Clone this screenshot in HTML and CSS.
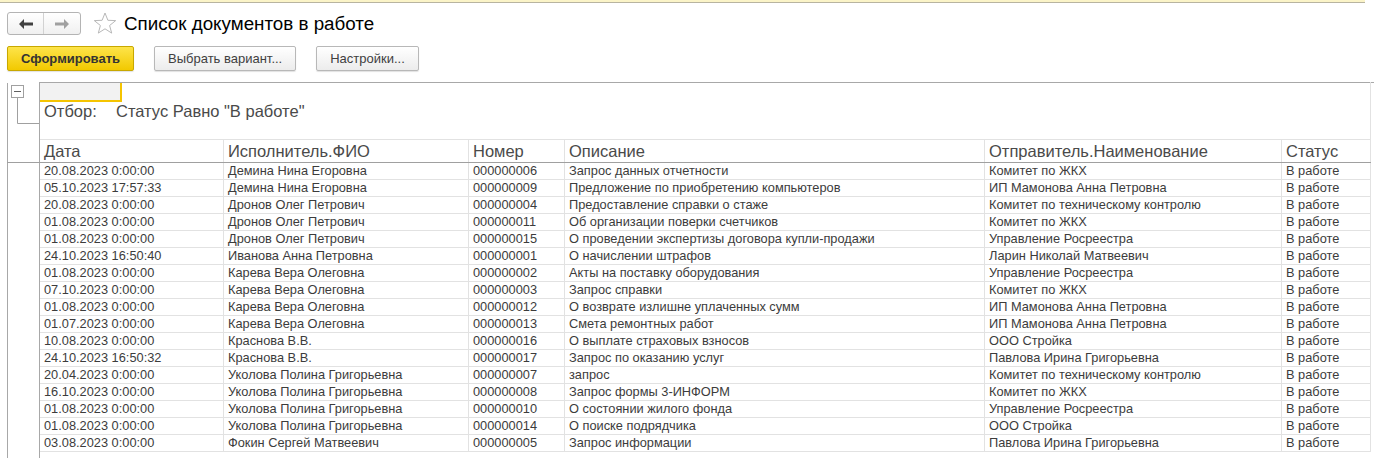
FILE: index.html
```html
<!DOCTYPE html>
<html lang="ru">
<head>
  <meta charset="UTF-8" />
  <title>Список документов в работе</title>
  <link rel="stylesheet" href="styles.css">
</head>
<body>
  <div class="topline"></div>

  <div class="titlebar">
    <div class="nav">
      <button class="nav-btn back">
        <svg width="14" height="10" viewBox="0 0 14 10"><path d="M0 5 L5 0 L5 3.5 L14 3.5 L14 6.5 L5 6.5 L5 10 Z" fill="#404040"/></svg>
      </button>
      <button class="nav-btn fwd">
        <svg width="14" height="10" viewBox="0 0 14 10"><path d="M14 5 L9 0 L9 3.5 L0 3.5 L0 6.5 L9 6.5 L9 10 Z" fill="#a0a0a0"/></svg>
      </button>
    </div>
    <svg class="star" width="24" height="23" viewBox="0 0 24 23"><path d="M12 1 L14.9 8.3 L22.7 8.6 L16.6 13.5 L18.7 21.1 L12 16.8 L5.3 21.1 L7.4 13.5 L1.3 8.6 L9.1 8.3 Z" fill="none" stroke="#b8b8b8" stroke-width="1"/></svg>
    <h1 class="title">Список документов в работе</h1>
  </div>

  <div class="toolbar">
    <button class="btn primary">Сформировать</button>
    <button class="btn">Выбрать вариант...</button>
    <button class="btn">Настройки...</button>
  </div>

  <div class="report">
    <table class="sheet">
      <colgroup>
        <col style="width:32px">
        <col style="width:184px">
        <col style="width:245px">
        <col style="width:96px">
        <col style="width:420px">
        <col style="width:297px">
        <col style="width:89px">
        <col>
      </colgroup>
      <tr class="group">
        <td class="gutter tree">
          <svg width="32" height="57" viewBox="0 0 32 57">
            <rect x="3.5" y="2.5" width="12" height="12" fill="#fff" stroke="#a0a0a0"/>
            <path d="M6 8.5 H13" stroke="#606060"/>
            <path d="M9.5 14.5 V40.5 H32" fill="none" stroke="#a0a0a0"/>
          </svg>
        </td>
        <td colspan="6" class="filter">
          <div class="sel-cell"></div>
          <div class="filter-text"><span class="filter-label">Отбор:</span><span>Статус Равно "В работе"</span></div>
        </td>
        <td class="outside"></td>
      </tr>
      <tr class="head">
        <td class="gutter"></td>
        <th>Дата</th>
        <th>Исполнитель.ФИО</th>
        <th>Номер</th>
        <th>Описание</th>
        <th>Отправитель.Наименование</th>
        <th>Статус</th>
        <td class="outside"></td>
      </tr>
      <tr><td class="gutter"></td><td>20.08.2023 0:00:00</td><td>Демина Нина Егоровна</td><td>000000006</td><td>Запрос данных отчетности</td><td>Комитет по ЖКХ</td><td>В работе</td><td class="outside"></td></tr>
      <tr><td class="gutter"></td><td>05.10.2023 17:57:33</td><td>Демина Нина Егоровна</td><td>000000009</td><td>Предложение по приобретению компьютеров</td><td>ИП Мамонова Анна Петровна</td><td>В работе</td><td class="outside"></td></tr>
      <tr><td class="gutter"></td><td>20.08.2023 0:00:00</td><td>Дронов Олег Петрович</td><td>000000004</td><td>Предоставление справки о стаже</td><td>Комитет по техническому контролю</td><td>В работе</td><td class="outside"></td></tr>
      <tr><td class="gutter"></td><td>01.08.2023 0:00:00</td><td>Дронов Олег Петрович</td><td>000000011</td><td>Об организации поверки счетчиков</td><td>Комитет по ЖКХ</td><td>В работе</td><td class="outside"></td></tr>
      <tr><td class="gutter"></td><td>01.08.2023 0:00:00</td><td>Дронов Олег Петрович</td><td>000000015</td><td>О проведении экспертизы договора купли-продажи</td><td>Управление Росреестра</td><td>В работе</td><td class="outside"></td></tr>
      <tr><td class="gutter"></td><td>24.10.2023 16:50:40</td><td>Иванова Анна Петровна</td><td>000000001</td><td>О начислении штрафов</td><td>Ларин Николай Матвеевич</td><td>В работе</td><td class="outside"></td></tr>
      <tr><td class="gutter"></td><td>01.08.2023 0:00:00</td><td>Карева Вера Олеговна</td><td>000000002</td><td>Акты на поставку оборудования</td><td>Управление Росреестра</td><td>В работе</td><td class="outside"></td></tr>
      <tr><td class="gutter"></td><td>07.10.2023 0:00:00</td><td>Карева Вера Олеговна</td><td>000000003</td><td>Запрос справки</td><td>Комитет по ЖКХ</td><td>В работе</td><td class="outside"></td></tr>
      <tr><td class="gutter"></td><td>01.08.2023 0:00:00</td><td>Карева Вера Олеговна</td><td>000000012</td><td>О возврате излишне уплаченных сумм</td><td>ИП Мамонова Анна Петровна</td><td>В работе</td><td class="outside"></td></tr>
      <tr><td class="gutter"></td><td>01.07.2023 0:00:00</td><td>Карева Вера Олеговна</td><td>000000013</td><td>Смета ремонтных работ</td><td>ИП Мамонова Анна Петровна</td><td>В работе</td><td class="outside"></td></tr>
      <tr><td class="gutter"></td><td>10.08.2023 0:00:00</td><td>Краснова В.В.</td><td>000000016</td><td>О выплате страховых взносов</td><td>ООО Стройка</td><td>В работе</td><td class="outside"></td></tr>
      <tr><td class="gutter"></td><td>24.10.2023 16:50:32</td><td>Краснова В.В.</td><td>000000017</td><td>Запрос по оказанию услуг</td><td>Павлова Ирина Григорьевна</td><td>В работе</td><td class="outside"></td></tr>
      <tr><td class="gutter"></td><td>20.04.2023 0:00:00</td><td>Уколова Полина Григорьевна</td><td>000000007</td><td>запрос</td><td>Комитет по техническому контролю</td><td>В работе</td><td class="outside"></td></tr>
      <tr><td class="gutter"></td><td>16.10.2023 0:00:00</td><td>Уколова Полина Григорьевна</td><td>000000008</td><td>Запрос формы 3-ИНФОРМ</td><td>Комитет по ЖКХ</td><td>В работе</td><td class="outside"></td></tr>
      <tr><td class="gutter"></td><td>01.08.2023 0:00:00</td><td>Уколова Полина Григорьевна</td><td>000000010</td><td>О состоянии жилого фонда</td><td>Управление Росреестра</td><td>В работе</td><td class="outside"></td></tr>
      <tr><td class="gutter"></td><td>01.08.2023 0:00:00</td><td>Уколова Полина Григорьевна</td><td>000000014</td><td>О поиске подрядчика</td><td>ООО Стройка</td><td>В работе</td><td class="outside"></td></tr>
      <tr><td class="gutter"></td><td>03.08.2023 0:00:00</td><td>Фокин Сергей Матвеевич</td><td>000000005</td><td>Запрос информации</td><td>Павлова Ирина Григорьевна</td><td>В работе</td><td class="outside"></td></tr>
      <tr class="tail"><td class="gutter"></td><td colspan="6"></td><td class="outside"></td></tr>
    </table>
  </div>
</body>
</html>
```

FILE: styles.css
```css
html, body {
  margin: 0;
  padding: 0;
  background: #fff;
  font-family: "Liberation Sans", Arial, sans-serif;
  overflow: hidden;
  height: 100%;
}

.topline {
  height: 2px;
  width: 1365px;
  background: #fbf4c8;
  border-bottom: 1px solid #b8b4a0;
}

.titlebar {
  display: flex;
  align-items: center;
  height: 23px;
  margin: 9px 0 0 7px;
}

.nav {
  display: flex;
  height: 23px;
  border: 1px solid #b4b4b4;
  border-radius: 3px;
  box-sizing: border-box;
  background: linear-gradient(#ffffff, #f0f0f0);
  overflow: hidden;
}

.nav-btn {
  width: 36px;
  height: 21px;
  border: none;
  background: transparent;
  padding: 0;
  display: flex;
  align-items: center;
  justify-content: center;
}

.nav-btn.back {
  border-right: 1px solid #d2d2d2;
}

.star {
  margin-left: 12px;
  margin-top: -1px;
}

.title {
  margin: 0 0 0 7px;
  font-size: 18.8px;
  font-weight: normal;
  color: #000;
  line-height: 23px;
}

.toolbar {
  display: flex;
  gap: 20px;
  margin: 11px 0 0 7px;
}

.btn {
  height: 25px;
  padding: 0 13px;
  font-family: "Liberation Sans", Arial, sans-serif;
  font-size: 13px;
  color: #404040;
  border: 1px solid #b8b8b8;
  border-radius: 2px;
  background: linear-gradient(#ffffff, #ececec);
  box-shadow: 0 1px 1px rgba(0, 0, 0, 0.12);
}

.btn.primary {
  width: 127px;
  font-weight: bold;
  color: #333;
  border-color: #c8a800;
  background: linear-gradient(#fde44a, #f2c900);
}

.report {
  margin: 11px 0 0 7px;
}

.sheet {
  border-collapse: collapse;
  table-layout: fixed;
  width: 1367px;
  font-size: 12.8px;
  color: #3c3c3c;
}

.sheet td, .sheet th {
  padding: 0 0 0 4px;
  height: 16px;
  line-height: 16px;
  white-space: nowrap;
  overflow: hidden;
  text-align: left;
  border: 1px solid #e2e2e2;
}

.sheet .gutter {
  padding: 0;
  border: none;
  border-left: 1px solid #a8a8a8;
  border-right: 1px solid #a8a8a8;
}

.sheet .outside {
  border: none;
}

.group td {
  border-top: 1px solid #a8a8a8;
  height: 56px;
  vertical-align: top;
}

.group .outside {
  border-top: 1px solid #a8a8a8;
}

.group .tree svg {
  display: block;
}

.sheet .filter {
  padding: 0;
  border-bottom: 1px solid #e2e2e2;
}

.sel-cell {
  width: 80px;
  height: 17px;
  background: #f2f2f2;
  border-right: 2px solid #f5c400;
  border-bottom: 2px solid #f5c400;
}

.filter-text {
  margin: 0 0 0 4px;
  font-size: 16.5px;
  line-height: 18px;
  color: #4a4a4a;
}

.filter-label {
  display: inline-block;
  width: 72px;
}

.head th {
  font-weight: normal;
  font-size: 16.5px;
  color: #4a4a4a;
  height: 22px;
  line-height: 22px;
  border-bottom: 1px solid #a0a0a0;
}

.head .gutter {
  border-bottom: 1px solid #a0a0a0;
}

.tail td {
  border: none;
  height: 8px;
}

.tail .gutter {
  border-left: 1px solid #a8a8a8;
  border-right: 1px solid #a8a8a8;
}
```
